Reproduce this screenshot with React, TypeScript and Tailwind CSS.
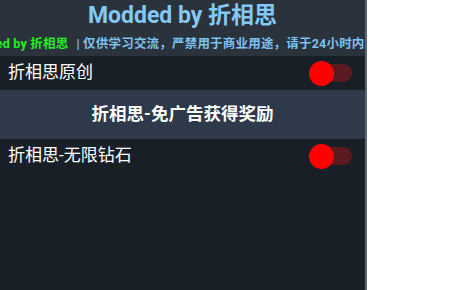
import React from "react";

function Toggle() {
  return (
    <div className="relative w-[43px] h-[26px] flex items-center shrink-0">
      <div className="absolute left-[4px] right-0 h-[18px] rounded-full bg-[#5a1a20]" />
      <div className="absolute left-0 w-[25px] h-[25px] rounded-full bg-[#ff0000]" />
    </div>
  );
}

export default function App() {
  const font = { fontFamily: "Roboto, 'Noto Sans CJK SC', sans-serif" };
  return (
    <div className="flex w-[449px] h-[290px] bg-white" style={font}>
      <div className="w-[367px] h-full bg-[#191f27] flex flex-col overflow-hidden border-r-2 border-[#5b6470]">
        <div className="h-[56px] bg-[#2a323c] flex flex-col items-center shrink-0">
          <div className="h-[29px] flex items-center text-[23px] font-bold text-[#84c9f6] leading-none pt-[2px]">
            Modded by 折相思
          </div>
          <div className="w-full overflow-hidden whitespace-nowrap h-[27px] flex items-center pt-[3px] text-[12.5px] tracking-[0.2px] font-bold leading-none">
            <span className="ml-[-37px] text-[#22f022] shrink-0">Modded by 折相思</span>
            <span className="ml-[8px] text-[#7cc2ef] shrink-0">| 仅供学习交流，严禁用于商业用途，请于24小时内删除</span>
          </div>
        </div>
        <div className="h-[34px] flex items-center justify-between pl-[8px] pr-[13px] shrink-0">
          <span className="text-[17px] text-white">折相思原创</span>
          <Toggle />
        </div>
        <div className="h-[49px] bg-[#2e3a4a] flex items-center justify-center shrink-0">
          <span className="text-[17.5px] font-bold text-white">折相思-免广告获得奖励</span>
        </div>
        <div className="h-[34px] flex items-center justify-between pl-[8px] pr-[13px] shrink-0">
          <span className="text-[17px] text-white">折相思-无限钻石</span>
          <Toggle />
        </div>
      </div>
    </div>
  );
}
